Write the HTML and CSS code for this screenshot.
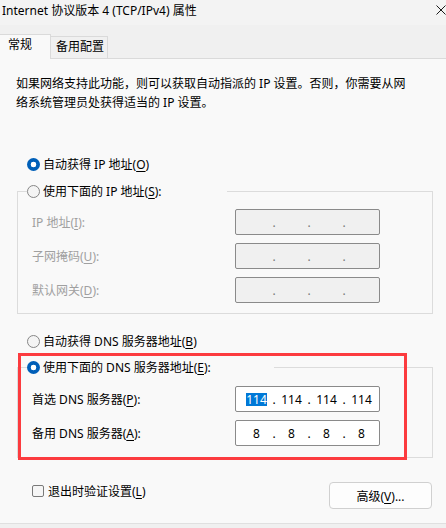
FILE: index.html
```html
<!DOCTYPE html>
<html lang="zh-CN">
<head>
<meta charset="utf-8">
<title>Internet 协议版本 4 (TCP/IPv4) 属性</title>
<link rel="stylesheet" href="styles.css">
</head>
<body>
<div class="window">
  <div class="titlebar">
    <span class="title">Internet 协议版本 4 (TCP/IPv4) 属性</span>
    <svg class="close" width="10" height="10" viewBox="0 0 10 10"><path d="M0.5 0.5 L9.5 9.5 M9.5 0.5 L0.5 9.5" stroke="#1a1a1a" stroke-width="1" fill="none"/></svg>
  </div>
  <div class="tabs">
    <div class="tab tab-active">常规</div>
    <div class="tab tab-idle">备用配置</div>
    <div class="tab-fill"></div>
  </div>
  <div class="panel">
    <p class="desc">如果网络支持此功能，则可以获取自动指派的 IP 设置。否则，你需要从网<br>络系统管理员处获得适当的 IP 设置。</p>

    <div class="opt opt-ip"><span class="radio radio-on"></span><span>自动获得 IP 地址(<u>O</u>)</span></div>

    <div class="group group-ip">
      <div class="group-head head-ip"><span class="radio"></span><span>使用下面的 IP 地址(<u>S</u>):</span></div>
      <div class="row row-first">
        <span class="label label-off">IP 地址(<u>I</u>):</span>
        <div class="ipbox ipbox-off"><span class="oct"></span><span class="dot">.</span><span class="oct"></span><span class="dot">.</span><span class="oct"></span><span class="dot">.</span><span class="oct"></span></div>
      </div>
      <div class="row">
        <span class="label label-off">子网掩码(<u>U</u>):</span>
        <div class="ipbox ipbox-off"><span class="oct"></span><span class="dot">.</span><span class="oct"></span><span class="dot">.</span><span class="oct"></span><span class="dot">.</span><span class="oct"></span></div>
      </div>
      <div class="row">
        <span class="label label-off">默认网关(<u>D</u>):</span>
        <div class="ipbox ipbox-off"><span class="oct"></span><span class="dot">.</span><span class="oct"></span><span class="dot">.</span><span class="oct"></span><span class="dot">.</span><span class="oct"></span></div>
      </div>
    </div>

    <div class="opt opt-dns"><span class="radio"></span><span>自动获得 DNS 服务器地址(<u>B</u>)</span></div>

    <div class="group group-dns">
      <div class="group-head head-dns"><span class="radio radio-on"></span><span>使用下面的 DNS 服务器地址(<u>E</u>):</span></div>
      <div class="row row-first-dns">
        <span class="label">首选 DNS 服务器(<u>P</u>):</span>
        <div class="ipbox"><span class="oct"><span class="sel">114</span></span><span class="dot">.</span><span class="oct">114</span><span class="dot">.</span><span class="oct">114</span><span class="dot">.</span><span class="oct">114</span></div>
      </div>
      <div class="row">
        <span class="label">备用 DNS 服务器(<u>A</u>):</span>
        <div class="ipbox"><span class="oct">8</span><span class="dot">.</span><span class="oct">8</span><span class="dot">.</span><span class="oct">8</span><span class="dot">.</span><span class="oct">8</span></div>
      </div>
    </div>

    <div class="footer">
      <div class="check-row"><span class="checkbox"></span><span>退出时验证设置(<u>L</u>)</span></div>
      <button class="btn">高级(<u>V</u>)...</button>
    </div>

    <div class="annot"></div>
  </div>
</div>
</body>
</html>
```

FILE: styles.css
```css
* { box-sizing: border-box; }
html, body { margin: 0; padding: 0; }
body {
  width: 446px;
  height: 528px;
  overflow: hidden;
  background: #f0f0f0;
  font-family: "Noto Sans", "Noto Sans CJK SC", sans-serif;
  font-size: 12px;
  color: #000;
}
.window { width: 446px; height: 528px; }
u { text-decoration: underline; text-underline-offset: 2px; text-decoration-thickness: 1px; }

.titlebar {
  height: 25px;
  background: #f3f3f3;
  display: flex;
  align-items: flex-start;
}
.title { padding-left: 2px; line-height: 22px; white-space: nowrap; }
.close { margin-left: auto; margin-top: 5px; flex: none; }

.tabs {
  height: 34px;
  display: flex;
  align-items: flex-end;
  background: #f0f0f0;
}
.tab { white-space: nowrap; line-height: 20px; }
.tab-active {
  width: 51px;
  height: 25px;
  padding-left: 8px;
  background: #f9f9f9;
  border-top: 1px solid #dadada;
  border-right: 1px solid #dadada;
}
.tab-idle {
  width: 57px;
  height: 23px;
  padding-left: 5px;
  background: #f0f0f0;
  border-top: 1px solid #dadada;
  border-right: 1px solid #dadada;
  border-bottom: 1px solid #dadada;
}
.tab-fill { flex: 1; height: 1px; border-bottom: 1px solid #dadada; }

.panel {
  position: relative;
  height: 465px;
  background: #f9f9f9;
  border-bottom: 1px solid #e0e0e0;
  display: flex;
  flex-direction: column;
  align-items: flex-start;
}
.desc { margin: 15px 0 0 16px; line-height: 19px; white-space: nowrap; }

.opt {
  height: 20px;
  display: flex;
  align-items: center;
  gap: 3px;
  margin-left: 27px;
  white-space: nowrap;
}
.opt-ip { margin-top: 42px; }
.opt-dns { margin-top: 17px; }

.radio {
  width: 13px;
  height: 13px;
  border-radius: 50%;
  border: 1px solid #868686;
  background: #f4f4f4;
  flex: none;
}
.radio-on {
  border: none;
  background: radial-gradient(circle, #ffffff 0 2.6px, #005fb8 3.1px);
}

.group {
  width: 416px;
  margin-left: 17px;
  border: 1px solid #dcdcdc;
  display: flex;
  flex-direction: column;
}
.group-ip { margin-top: 17px; padding-bottom: 10px; }
.group-dns { margin-top: 16px; padding-bottom: 11px; }
.group-head {
  height: 20px;
  margin: -11px 0 0 9px;
  background: #f9f9f9;
  display: flex;
  align-items: center;
  gap: 3px;
  white-space: nowrap;
}
.head-ip { width: 200px; }
.head-dns { width: 247px; }

.row {
  height: 26px;
  display: flex;
  align-items: center;
  padding-left: 14px;
  margin-top: 8px;
}
.row-first-dns { margin-top: 9px; }
.label { width: 203px; white-space: nowrap; }
.label-off { color: #a0a0a0; }

.ipbox {
  width: 145px;
  height: 26px;
  border: 1px solid #8a8a8a;
  border-radius: 2px;
  background: #ffffff;
  display: flex;
  align-items: center;
  padding-left: 6px;
}
.ipbox-off { background: #f0f0f0; }
.ipbox-off .dot { color: #7a7a7a; }
.oct { width: 29px; text-align: center; line-height: 13px; }
.dot { width: 6px; text-align: center; line-height: 13px; }
.sel { background: #0078d7; color: #fff; display: inline-block; padding: 0 0.5px; }

.footer {
  align-self: stretch;
  margin-top: 24px;
  display: flex;
  align-items: flex-start;
  justify-content: space-between;
  padding: 0 14px 0 32px;
}
.check-row {
  margin-top: -1px;
  height: 20px;
  display: flex;
  align-items: center;
  gap: 4px;
  white-space: nowrap;
}
.checkbox {
  width: 12px;
  height: 12px;
  border: 1px solid #7a7a7a;
  border-radius: 2px;
  background: #f6f6f6;
}
.btn {
  width: 103px;
  height: 27px;
  border: 1px solid #d0d0d0;
  border-radius: 4px;
  background: #fdfdfd;
  font: inherit;
  color: #000;
  padding: 0;
}

.annot {
  position: absolute;
  left: 18px;
  top: 294px;
  width: 389px;
  height: 107px;
  border: 3px solid #fc3b3f;
  pointer-events: none;
}
```
